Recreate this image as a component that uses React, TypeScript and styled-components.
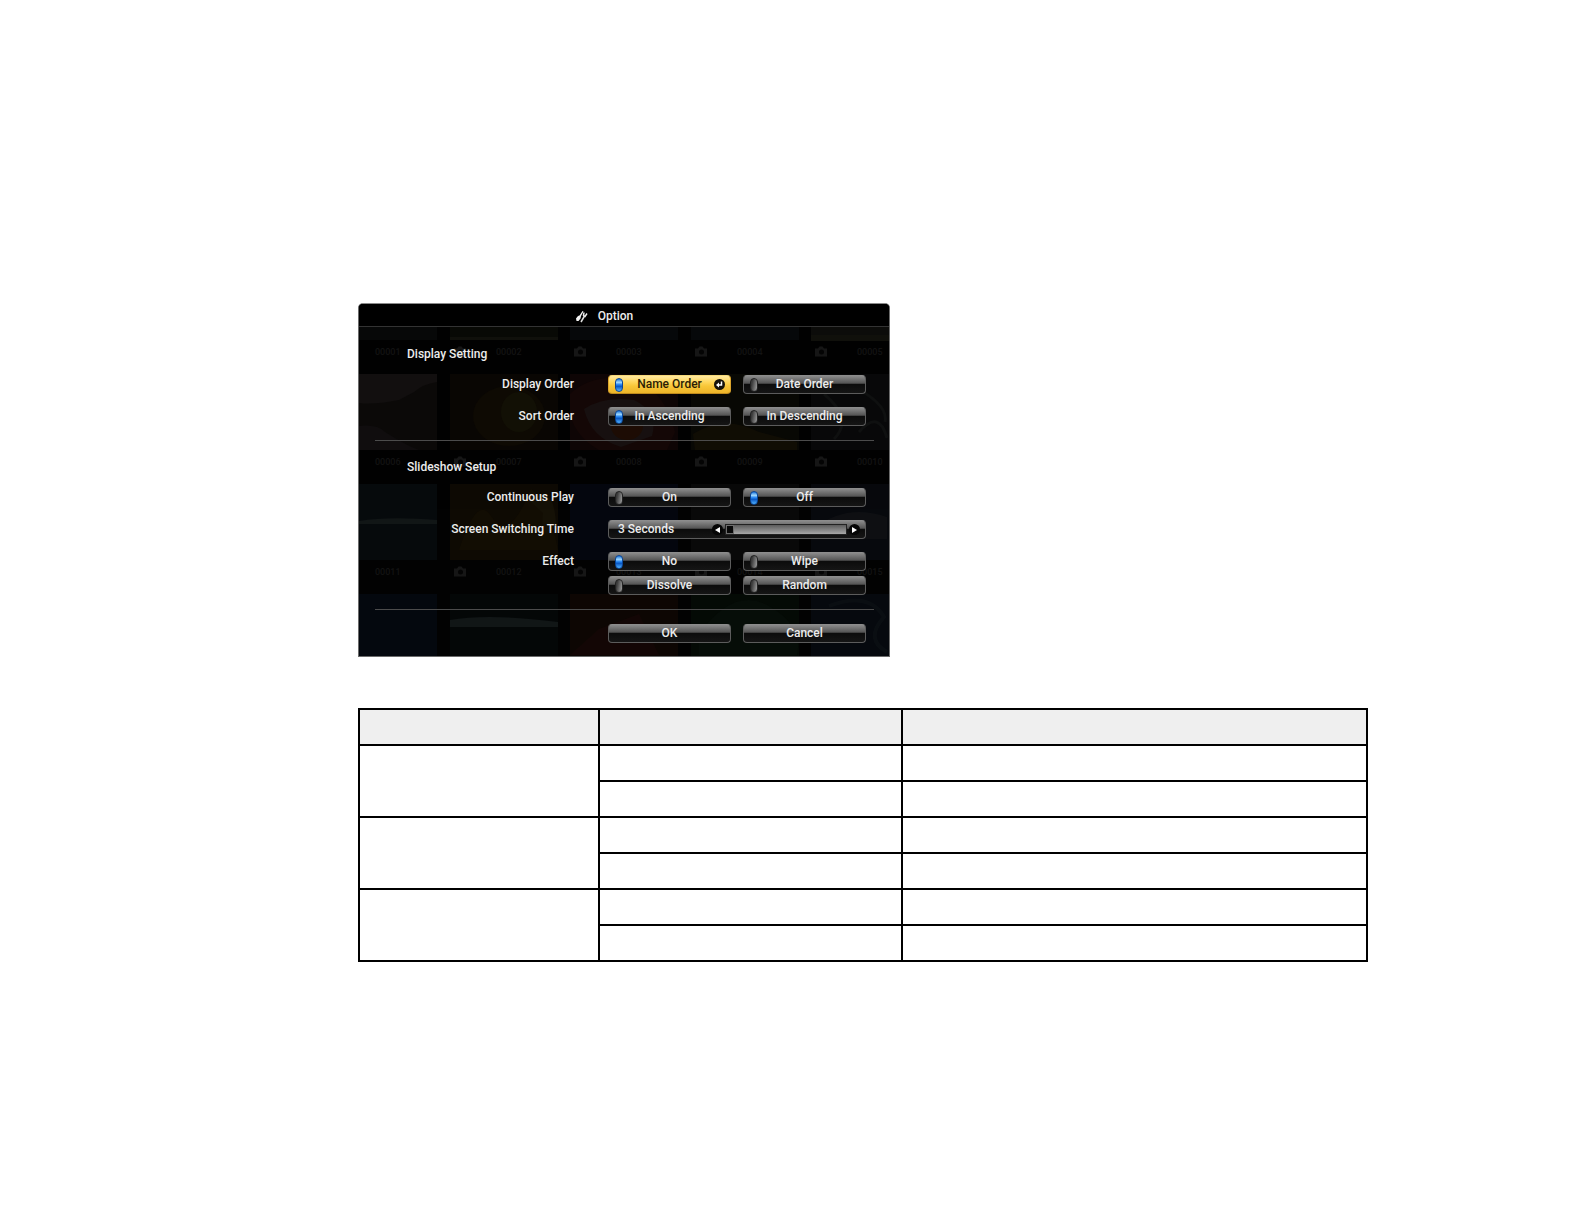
import React, { useState } from "react";
import styled, { createGlobalStyle, css } from "styled-components";

const GlobalStyle = createGlobalStyle`
  * { box-sizing: border-box; }
  body { margin: 0; background: #fff; font-family: Roboto, "Liberation Sans", sans-serif; }
`;

const Page = styled.main`
  display: flex;
  flex-direction: column;
  gap: 51px;
  padding: 303px 216px 40px 358px;
`;

const Panel = styled.form`
  position: relative;
  width: 100%;
  max-width: 532px;
  overflow: hidden;
  border: 1px solid #6b6b6b;
  border-top-color: #8a8a8a;
  border-radius: 5px 5px 0 0;
  background: #020202;
  color: #ececec;
  font-size: 12px;
  font-weight: 500;
  line-height: 19px;
`;

const Backdrop = styled.svg`
  position: absolute;
  inset: 0;
  width: 100%;
  height: 100%;
  opacity: 0.8;
`;

const Content = styled.div`
  position: relative;
`;

const TitleBar = styled.header`
  display: flex;
  align-items: center;
  justify-content: center;
  gap: 10px;
  height: 23px;
  margin-bottom: 1px;
  padding: 3px 40px 0 0;
  background: #000;
  border-bottom: 1px solid #333;
`;

const Title = styled.h1`
  margin: 0;
  font-size: 12px;
  font-weight: 500;
`;

const Section = styled.section`
  padding: 16px 23px 14px 0;
`;

const Heading = styled.h2`
  margin: 0 0 11px 48px;
  font-size: 12px;
  font-weight: 500;
  line-height: 20px;
`;

const Rows = styled.div`
  display: flex;
  flex-direction: column;
  gap: 13px;
`;

const Row = styled.div`
  display: grid;
  grid-template-columns: 215px minmax(0, 1fr);
  column-gap: 34px;
`;

const RowLabel = styled.span`
  text-align: right;
  white-space: nowrap;
`;

const Choices = styled.div`
  display: grid;
  grid-template-columns: 1fr 1fr;
  gap: 5px 12px;
`;

const Rule = styled.hr`
  height: 1px;
  margin: 0 15px 0 16px;
  border: 0;
  background: #4c4c4c;
`;

const glossy = css`
  border: 1px solid #5c5c5c;
  border-top-color: #8c8c8c;
  border-radius: 4px;
  background: linear-gradient(#8a8a8a 0, #555 42%, #0c0c0c 50%, #151515 100%);
`;

const Option = styled.label<{ $focused?: boolean }>`
  position: relative;
  display: flex;
  align-items: center;
  justify-content: center;
  height: 19px;
  ${glossy}
  ${(p) =>
    p.$focused &&
    css`
      border-color: #f5d878 #dca52c #c08a1c;
      background: linear-gradient(#ffe9a0 0, #ffd75c 35%, #f8c637 60%, #eeb429 100%);
      color: #2b1d05;
    `}
`;

const Lamp = styled.input`
  appearance: none;
  position: absolute;
  left: 6px;
  top: 2px;
  width: 8px;
  height: 14px;
  margin: 0;
  border: 1px solid #222;
  border-radius: 4px;
  background: linear-gradient(100deg, #3a3a3a 20%, #a0a0a0 100%);
  &:checked {
    border-color: #0a4596;
    background: linear-gradient(#1a74dc 0, #9fd8ff 28%, #2080ee 48%, #0b58c4 62%, #52b4ff 100%);
  }
`;

const EnterMark = styled.svg`
  position: absolute;
  right: 5px;
  top: 3px;
`;

const TimeBar = styled.div`
  display: flex;
  align-items: center;
  height: 19px;
  padding: 0 5px 0 9px;
  ${glossy}
`;

const TimeValue = styled.output`
  flex: 0 0 94px;
`;

const Arrow = styled.button`
  display: flex;
  flex: 0 0 11px;
  align-items: center;
  justify-content: center;
  height: 11px;
  padding: 0;
  border: 0;
  border-radius: 6px;
  background: #050505;
`;

const Track = styled.input`
  appearance: none;
  flex: 1;
  width: 0;
  min-width: 0;
  height: 11px;
  margin: 0 2px;
  border: 1px solid #222;
  background: linear-gradient(#5c5c5c, #a8a8a8);
  &::-webkit-slider-thumb {
    appearance: none;
    width: 8px;
    height: 9px;
    border: 1px solid #6e6e6e;
    background: #080808;
  }
`;

const Footer = styled.footer`
  padding: 14px 23px 13px 249px;
`;

const Action = styled.button`
  height: 19px;
  padding: 0;
  color: inherit;
  font: inherit;
  line-height: 17px;
  ${glossy}
`;

const Grid = styled.table`
  width: 100%;
  border-collapse: collapse;
  table-layout: fixed;
  th, td { height: 36px; padding: 0; border: 2px solid #000; }
  th { background: #efefef; }
`;

const Col = styled.col<{ $w?: string }>`
  width: ${(p) => p.$w ?? "auto"};
`;

const columns = [-30, 91, 211, 332, 452];
const tints = [
  ["#090a0a", "#0b0c07", "#080b0d", "#080b0d", "#10100d"],
  ["#0e0c0b", "#0c0804", "#120707", "#0b0a05", "#0a0b0c"],
  ["#080d0f", "#110c04", "#050812", "#0b0b0b", "#090b10"],
  ["#050a12", "#050909", "#100704", "#050c06", "#070b12"],
];
const captions = [
  ["00001", "00002", "00003", "00004", "00005"],
  ["00006", "00007", "00008", "00009", "00010"],
  ["00011", "00012", "00013", "00014", "00015"],
];

function Thumbnails() {
  return (
    <Backdrop viewBox="0 0 530 352" preserveAspectRatio="none" aria-hidden="true">
      {tints.map((row, r) =>
        row.map((fill, c) => (
          <rect key={`${r}-${c}`} x={columns[c]} y={-40 + r * 110} width="108" height="76" fill={fill} />
        ))
      )}
      <path d="M0 70H78V78Q64 80 55 88L40 96Q15 101 0 99Z" fill="#171313" />
      <path d="M0 122Q18 120 26 128Q48 142 60 146H0Z" fill="#141112" />
      <path d="M91 33H199V36H91ZM452 31H530V37H452Z" fill="#15150e" />
      <ellipse cx="150" cy="112" rx="36" ry="30" fill="#120d04" />
      <ellipse cx="160" cy="108" rx="18" ry="20" fill="#171507" />
      <path d="M211 90Q230 72 262 74Q304 78 316 128L308 146H240Q216 132 211 110Z" fill="#1a0908" />
      <path d="M225 105Q245 92 275 96Q300 108 293 132L262 143Q232 134 225 105Z" fill="#1d1514" />
      <ellipse cx="268" cy="122" rx="16" ry="14" fill="#251005" />
      <path d="M334 130Q365 110 400 128L438 138V146H336Z" fill="#151106" />
      <path d="M465 90Q495 115 475 135M490 80Q530 100 526 118M500 128Q520 105 528 134" stroke="#131414" strokeWidth="3" fill="none" />
      <path d="M0 217Q30 212 78 216V220H0ZM91 316Q130 309 199 318V323H91Z" fill="#151b1c" />
      <path d="M100 246Q118 190 132 212Q150 240 172 185Q190 198 199 246Z" fill="#171004" />
      <path d="M170 196Q196 178 197 222Q180 242 184 209Z" fill="#1a1508" />
      <path d="M455 225Q486 199 528 213V235H480Z" fill="#111317" />
      <path d="M211 351L240 325L280 310L300 351Z" fill="#180806" />
      <path d="M340 330Q375 282 410 302T438 351H340Z" fill="#07100a" />
      <path d="M470 302Q510 287 525 313Q505 335 528 348" stroke="#0d1217" strokeWidth="4" fill="none" />
      {captions.map((row, r) =>
        row.map((text, c) => (
          <g key={text} transform={`translate(${columns[c]} ${42 + r * 110})`}>
            <path d="M4 2.5h3l1.500-2h3l1.500 2h3v8h-12z" fill="#1c1c1c" />
            <circle cx="10.500" cy="6" r="2.500" fill="#050505" />
            <text x="46" y="9" fontSize="9" fill="#181818">{text}</text>
          </g>
        ))
      )}
    </Backdrop>
  );
}

interface ChoiceRowProps {
  label: string;
  name: string;
  options: string[];
  initial: string;
  highlight?: string;
}

function ChoiceRow({ label, name, options, initial, highlight }: ChoiceRowProps) {
  const [value, setValue] = useState(initial);
  return (
    <Row role="radiogroup" aria-labelledby={`${name}-label`}>
      <RowLabel id={`${name}-label`}>{label}</RowLabel>
      <Choices>
        {options.map((option) => (
          <Option key={option} $focused={option === highlight}>
            <Lamp type="radio" name={name} checked={value === option} onChange={() => setValue(option)} />
            {option}
            {option === highlight && (
              <EnterMark width="11" height="11" viewBox="0 0 11 11" aria-hidden="true">
                <circle cx="5.500" cy="5.500" r="5.500" fill="#15120a" />
                <path d="M7.500 2.500v3.500h-3.500" stroke="#fff" strokeWidth="1.500" fill="none" />
                <path d="M2 6l3-2.500v5z" fill="#fff" />
              </EnterMark>
            )}
          </Option>
        ))}
      </Choices>
    </Row>
  );
}

function TimeRow() {
  const [seconds, setSeconds] = useState(3);
  return (
    <Row>
      <RowLabel as="label" htmlFor="switching-time">Screen Switching Time</RowLabel>
      <TimeBar>
        <TimeValue htmlFor="switching-time">{`${seconds} Seconds`}</TimeValue>
        <Arrow type="button" aria-label="Shorter" onClick={() => setSeconds((s) => Math.max(3, s - 1))}>
          <svg width="5" height="6" viewBox="0 0 5 6"><path d="M5 0v6L0 3z" fill="#fff" /></svg>
        </Arrow>
        <Track id="switching-time" type="range" min={3} max={60} value={seconds} onChange={(e) => setSeconds(Number(e.target.value))} />
        <Arrow type="button" aria-label="Longer" onClick={() => setSeconds((s) => Math.min(60, s + 1))}>
          <svg width="5" height="6" viewBox="0 0 5 6"><path d="M0 0v6l5-3z" fill="#fff" /></svg>
        </Arrow>
      </TimeBar>
    </Row>
  );
}

export default function App() {
  return (
    <>
      <GlobalStyle />
      <Page>
        <Panel onSubmit={(e) => e.preventDefault()}>
          <Thumbnails />
          <Content>
            <TitleBar>
              <svg width="13" height="13" viewBox="0 0 13 13" aria-hidden="true">
                <path d="M1 8.500L3 6L4.500 5.500L7.500 1L8.500 1.500L6 6L5.500 8.500L3.500 11L1.500 11Z" fill="#f4f4f4" />
                <path d="M6 12L9.500 6" stroke="#e0e0e0" strokeWidth="1.500" />
                <path d="M9 2.500L8.500 5.500L10 6.500L12 3.500" stroke="#ececec" strokeWidth="1.500" fill="none" />
              </svg>
              <Title>Option</Title>
            </TitleBar>
            <Section>
              <Heading>Display Setting</Heading>
              <Rows>
                <ChoiceRow label="Display Order" name="display-order" options={["Name Order", "Date Order"]} initial="Name Order" highlight="Name Order" />
                <ChoiceRow label="Sort Order" name="sort-order" options={["In Ascending", "In Descending"]} initial="In Ascending" />
              </Rows>
            </Section>
            <Rule />
            <Section>
              <Heading>Slideshow Setup</Heading>
              <Rows>
                <ChoiceRow label="Continuous Play" name="continuous-play" options={["On", "Off"]} initial="Off" />
                <TimeRow />
                <ChoiceRow label="Effect" name="effect" options={["No", "Wipe", "Dissolve", "Random"]} initial="No" />
              </Rows>
            </Section>
            <Rule />
            <Footer>
              <Choices>
                <Action type="submit">OK</Action>
                <Action type="button">Cancel</Action>
              </Choices>
            </Footer>
          </Content>
        </Panel>
        <Grid>
          <colgroup>
            <Col $w="240px" />
            <Col $w="303px" />
            <Col />
          </colgroup>
          <thead>
            <tr><th /><th /><th /></tr>
          </thead>
          <tbody>
            {[0, 1, 2].map((group) => (
              <React.Fragment key={group}>
                <tr><td rowSpan={2} /><td /><td /></tr>
                <tr><td /><td /></tr>
              </React.Fragment>
            ))}
          </tbody>
        </Grid>
      </Page>
    </>
  );
}
